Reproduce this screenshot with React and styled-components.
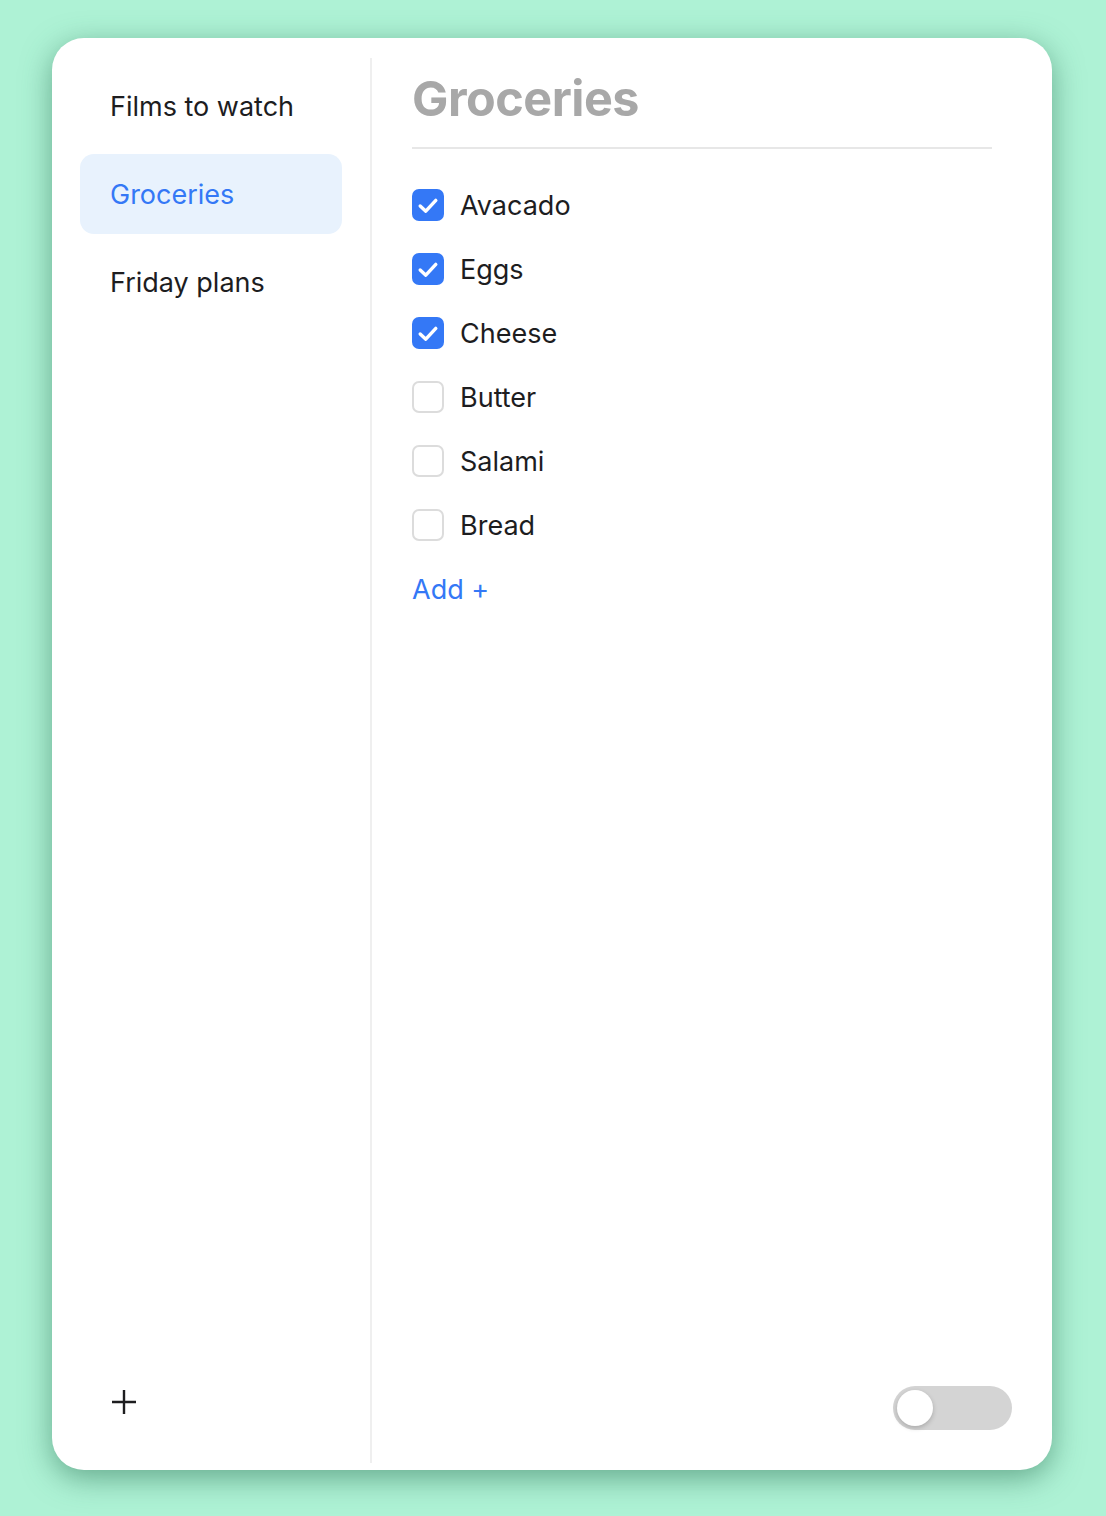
import React from "react";
import styled, { createGlobalStyle } from "styled-components";

const Global = createGlobalStyle`
  html, body { margin: 0; padding: 0; }
  body {
    background: #aef2d5;
    font-family: Inter, "Noto Sans", sans-serif;
    -webkit-font-smoothing: antialiased;
  }
`;

const Page = styled.div`
  width: 1106px;
  height: 1516px;
  box-sizing: border-box;
  padding: 38px 54px 46px 52px;
  display: flex;
`;

const Card = styled.div`
  flex: 1;
  background: #fff;
  border-radius: 32px;
  box-shadow: 0 8px 30px rgba(40, 110, 80, 0.55);
  display: flex;
  padding: 20px 0 7px 0;
  box-sizing: border-box;
`;

const Sidebar = styled.nav`
  width: 320px;
  flex-shrink: 0;
  padding: 8px 28px 48px 28px;
  box-sizing: border-box;
  display: flex;
  flex-direction: column;
  gap: 8px;
  border-right: 2px solid #efefef;
`;

const NavItem = styled.div`
  height: 80px;
  display: flex;
  align-items: center;
  padding-left: 30px;
  border-radius: 14px;
  font-size: 27px;
  color: ${(p) => (p.$active ? "#3478f6" : "#1d1d1f")};
  background: ${(p) => (p.$active ? "#e8f2fd" : "transparent")};
`;

const Spacer = styled.div`
  flex: 1;
`;

const AddList = styled.div`
  width: 26px;
  height: 26px;
  margin-left: 31px;
  display: flex;
`;

const Main = styled.main`
  flex: 1;
  padding: 0 40px 33px 40px;
  display: flex;
  flex-direction: column;
`;

const Title = styled.h1`
  margin: 0 20px 0 0;
  padding: 12px 0 19px 0;
  font-size: 48.5px;
  line-height: 58px;
  font-weight: 700;
  color: #a8a8a8;
  letter-spacing: -0.5px;
  border-bottom: 2px solid #e7e7e7;
`;

const List = styled.div`
  display: flex;
  flex-direction: column;
  padding-top: 24px;
`;

const Row = styled.label`
  height: 64px;
  display: flex;
  align-items: center;
  gap: 16px;
  font-size: 27px;
  color: #1d1d1f;
`;

const Box = styled.span`
  width: 32px;
  height: 32px;
  box-sizing: border-box;
  border-radius: 7px;
  display: flex;
  align-items: center;
  justify-content: center;
  background: ${(p) => (p.$checked ? "#3478f6" : "#fff")};
  border: ${(p) => (p.$checked ? "none" : "2px solid #dcdcdc")};
`;

const AddItem = styled.div`
  height: 64px;
  display: flex;
  align-items: center;
  font-size: 27px;
  color: #3478f6;
`;

const Footer = styled.div`
  margin-top: auto;
  display: flex;
  justify-content: flex-end;
`;

const Toggle = styled.div`
  width: 119px;
  height: 44px;
  border-radius: 22px;
  background: #d4d4d4;
  padding: 4px;
  box-sizing: border-box;
  display: flex;
`;

const Knob = styled.div`
  width: 36px;
  height: 36px;
  border-radius: 50%;
  background: #fff;
  box-shadow: 0 2px 5px rgba(0, 0, 0, 0.2);
`;

const Check = () => (
  <svg width="32" height="32" viewBox="0 0 32 32" fill="none">
    <path d="M8.2 17 L13.8 22.2 L23.8 11.4" stroke="#fff" strokeWidth="3.4" strokeLinecap="round" strokeLinejoin="round" />
  </svg>
);

const items = [
  { name: "Avacado", done: true },
  { name: "Eggs", done: true },
  { name: "Cheese", done: true },
  { name: "Butter", done: false },
  { name: "Salami", done: false },
  { name: "Bread", done: false },
];

export default function App() {
  const lists = ["Films to watch", "Groceries", "Friday plans"];
  return (
    <Page>
      <Global />
      <Card>
        <Sidebar>
          {lists.map((l) => (
            <NavItem key={l} $active={l === "Groceries"}>
              {l}
            </NavItem>
          ))}
          <Spacer />
          <AddList>
            <svg width="26" height="26" viewBox="0 0 26 26">
              <path d="M13 1 V25 M1 13 H25" stroke="#1d1d1f" strokeWidth="2.4" />
            </svg>
          </AddList>
        </Sidebar>
        <Main>
          <Title>Groceries</Title>
          <List>
            {items.map((it) => (
              <Row key={it.name}>
                <Box $checked={it.done}>{it.done && <Check />}</Box>
                {it.name}
              </Row>
            ))}
            <AddItem>Add +</AddItem>
          </List>
          <Footer>
            <Toggle>
              <Knob />
            </Toggle>
          </Footer>
        </Main>
      </Card>
    </Page>
  );
}
